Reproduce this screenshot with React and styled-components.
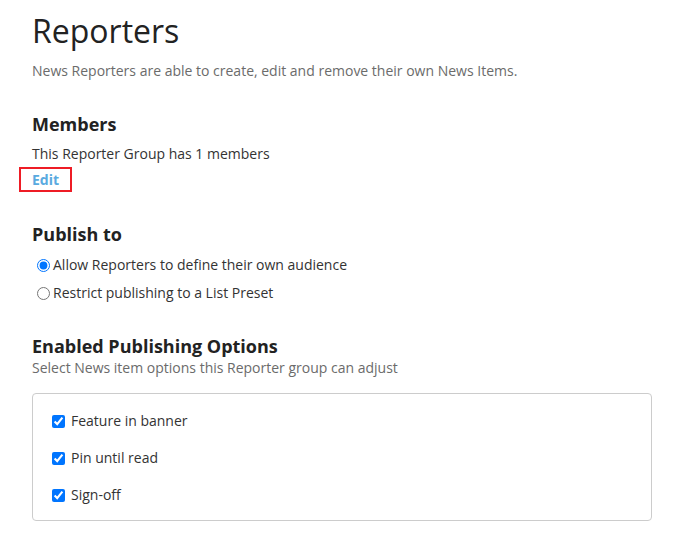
import React from 'react';
import styled, { createGlobalStyle } from 'styled-components';

const GlobalStyle = createGlobalStyle`
  body {
    margin: 0;
    background: #fff;
    font-family: "Open Sans", "Liberation Sans", sans-serif;
    color: #333;
  }
`;

const Page = styled.div`
  padding: 12px 21px 0 32px;
`;

const Title = styled.h1`
  margin: 0;
  font-size: 32px;
  line-height: 38px;
  font-weight: 400;
  color: #222;
`;

const Lead = styled.p`
  margin: ${p => p.mt || 0}px 0 0;
  font-size: 14px;
  line-height: 20px;
  color: #6b6b6b;
`;

const Heading = styled.h2`
  margin: ${p => p.mt}px 0 0;
  font-size: 18px;
  line-height: 24px;
  font-weight: 700;
  color: #222;
`;

const Text = styled.p`
  margin: 8px 0 0;
  font-size: 14px;
  line-height: 20px;
  color: #333;
`;

const EditRow = styled.div`
  display: flex;
  margin-top: 3px;
`;

const EditLink = styled.a`
  display: inline-block;
  margin-left: -13px;
  padding: 1px 11px 0;
  border: 2px solid #ee1c25;
  font-size: 14px;
  line-height: 20px;
  font-weight: 700;
  color: #5aaae0;
  text-decoration: none;
  cursor: pointer;
`;

const RadioList = styled.div`
  display: flex;
  flex-direction: column;
  gap: 8px;
  margin-top: 9px;
`;

const Option = styled.label`
  display: flex;
  align-items: center;
  font-size: 14px;
  line-height: 20px;
  color: #333;
`;

const Radio = styled.input.attrs({ type: 'radio' })`
  width: 13px;
  height: 13px;
  margin: 0 3px 0 5px;
`;

const Box = styled.div`
  display: flex;
  flex-direction: column;
  gap: 17px;
  margin-top: 15px;
  padding: 17px 15px 15px;
  border: 1px solid #ccc;
  border-radius: 4px;
`;

const Check = styled.input.attrs({ type: 'checkbox' })`
  width: 13px;
  height: 13px;
  margin: 0 6px 0 4px;
`;

const publishOptions = [
  { id: 'own', label: 'Allow Reporters to define their own audience', checked: true },
  { id: 'preset', label: 'Restrict publishing to a List Preset', checked: false },
];

const itemOptions = ['Feature in banner', 'Pin until read', 'Sign-off'];

export default function App() {
  return (
    <Page>
      <GlobalStyle />
      <Title>Reporters</Title>
      <Lead mt={11}>News Reporters are able to create, edit and remove their own News Items.</Lead>

      <Heading mt={31}>Members</Heading>
      <Text>This Reporter Group has 1 members</Text>
      <EditRow>
        <EditLink>Edit</EditLink>
      </EditRow>

      <Heading mt={30}>Publish to</Heading>
      <RadioList>
        {publishOptions.map(o => (
          <Option key={o.id}>
            <Radio name="publish" defaultChecked={o.checked} />
            {o.label}
          </Option>
        ))}
      </RadioList>

      <Heading mt={31}>Enabled Publishing Options</Heading>
      <Lead>Select News item options this Reporter group can adjust</Lead>
      <Box>
        {itemOptions.map(label => (
          <Option key={label}>
            <Check defaultChecked />
            {label}
          </Option>
        ))}
      </Box>
    </Page>
  );
}
